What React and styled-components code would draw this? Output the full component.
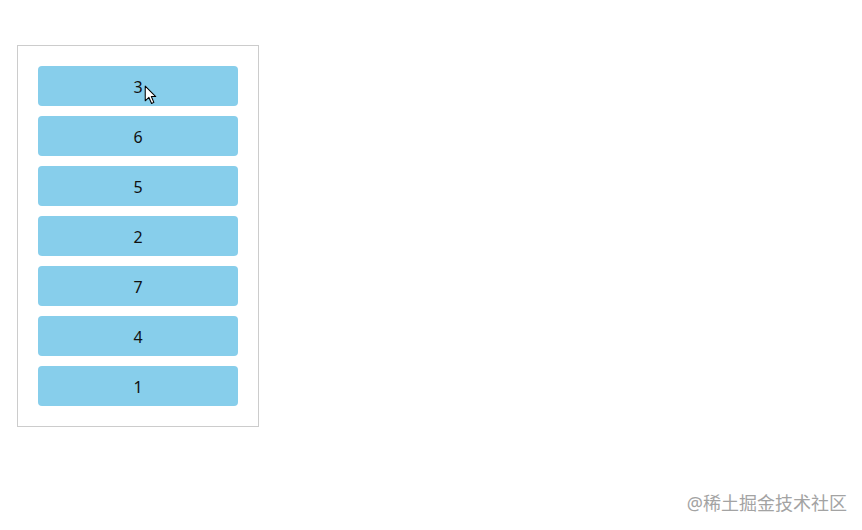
import React from "react";
import styled, { createGlobalStyle } from "styled-components";

const GlobalStyle = createGlobalStyle`
  html, body {
    margin: 0;
    padding: 0;
    background: #fff;
  }
  body {
    font-family: "Noto Sans", "Open Sans", "Noto Sans CJK SC", sans-serif;
  }
`;

const items = [3, 6, 5, 2, 7, 4, 1];

const App = () => {
  return (
    <Page>
      <GlobalStyle />
      <List>
        {items.map((n, i) => (
          <Item key={n}>
            {n}
            {i === 0 && (
              <Cursor viewBox="0 0 12 19" width="13" height="20">
                <path
                  d="M1 1 L1 15 L4.5 11.8 L7 17.5 L9.2 16.5 L6.8 11 L11 11 Z"
                  fill="#fff"
                  stroke="#000"
                  strokeWidth="1"
                  strokeLinejoin="round"
                />
              </Cursor>
            )}
          </Item>
        ))}
      </List>
      <Watermark>@稀土掘金技术社区</Watermark>
    </Page>
  );
};

export default App;

// Styled Components

const Page = styled.div`
  position: relative;
  width: 862px;
  height: 530px;
  padding: 45px 0 0 17px;
  box-sizing: border-box;
`;

const List = styled.div`
  width: 200px;
  padding: 20px;
  border: 1px solid #cccccc;
  display: flex;
  flex-direction: column;
  gap: 10px;
`;

const Item = styled.div`
  position: relative;
  box-sizing: border-box;
  height: 40px;
  padding-top: 1px;
  line-height: 40px;
  text-align: center;
  background-color: #87ceeb;
  border-radius: 4px;
  font-size: 16px;
  color: #111;
`;

const Cursor = styled.svg`
  position: absolute;
  left: 106px;
  top: 19px;
`;

const Watermark = styled.div`
  position: absolute;
  right: 15px;
  bottom: 15px;
  font-size: 18px;
  color: #a3a3a3;
  font-family: "Noto Sans", "Noto Sans CJK SC", sans-serif;
`;
